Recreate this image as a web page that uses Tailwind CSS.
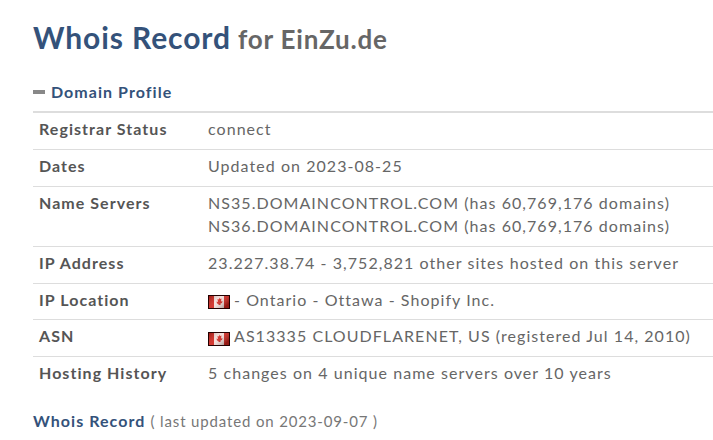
<!DOCTYPE html><html><head><script src="https://cdn.jsdelivr.net/npm/@tailwindcss/browser@4"></script></head>
<body class="bg-white overflow-hidden h-[440px] font-['Lato',sans-serif] text-[#666] tracking-[1.05px]">
<div class="pl-[33px] pt-[17px]">
<h1 class="text-[26px] leading-[40px] font-bold text-[#666] tracking-[0.8px]"><span class="text-[30px] text-[#34527a] tracking-[0.9px]">Whois Record</span> for EinZu.de</h1>
<div class="mt-[20px] flex items-center h-[26px] text-[16px] font-bold text-[#34527a]"><span class="w-[12px] h-[4px] bg-[#888] mr-[6px]"></span>Domain Profile</div>
<div class="mt-[6px] text-[16px] border-t-2 border-[#ddd]">
<div class="flex border-b border-[#ddd] pt-[6px] pb-[10px] pl-[6px] leading-[20px]"><div class="w-[169px] font-bold text-[#555]">Registrar Status</div><div>connect</div></div>
<div class="flex border-b border-[#ddd] pt-[6px] pb-[10px] pl-[6px] leading-[20px]"><div class="w-[169px] font-bold text-[#555]">Dates</div><div>Updated on 2023-08-25</div></div>
<div class="flex border-b border-[#ddd] pt-[4px] pb-[9px] pl-[6px] leading-[23px]"><div class="w-[169px] font-bold text-[#555]">Name Servers</div><div>NS35.DOMAINCONTROL.COM (has 60,769,176 domains)<br>NS36.DOMAINCONTROL.COM (has 60,769,176 domains)</div></div>
<div class="flex border-b border-[#ddd] pt-[6px] pb-[10px] pl-[6px] leading-[20px]"><div class="w-[169px] font-bold text-[#555]">IP Address</div><div>23.227.38.74 - 3,752,821 other sites hosted on this server</div></div>
<div class="flex border-b border-[#ddd] pt-[6px] pb-[9px] pl-[6px] leading-[20px]"><div class="w-[169px] font-bold text-[#555]">IP Location</div><div class="flex items-center"><svg width="22" height="14" class="mr-[4px] mt-[3px]"><defs><linearGradient id="s" x1="0" y1="0" x2="1" y2="0.6"><stop offset="0" stop-color="#000" stop-opacity="0.25"/><stop offset="0.5" stop-color="#fff" stop-opacity="0.1"/><stop offset="1" stop-color="#000" stop-opacity="0.3"/></linearGradient></defs><rect width="22" height="14" fill="#200"/><rect x="1" y="1" width="20" height="12" fill="#f6dcd8"/><rect x="1" y="1" width="5" height="12" fill="#d0241c"/><rect x="16" y="1" width="5" height="12" fill="#d0241c"/><path d="M11 2.500l1 1.500 1.500-.5-.5 3 1.500-.5-.5 2-1.500.5v1.500h-2V9l-1.500-.5-.5-2 1.500.5-.5-3 1.500.5z" fill="#d0241c"/><rect x="1" y="1" width="20" height="12" fill="url(#s)"/></svg>- Ontario - Ottawa - Shopify Inc.</div></div>
<div class="flex border-b border-[#ddd] pt-[6px] pb-[10px] pl-[6px] leading-[20px]"><div class="w-[169px] font-bold text-[#555]">ASN</div><div class="flex items-center"><svg width="22" height="14" class="mr-[4px] mt-[6px]"><defs><linearGradient id="t" x1="0" y1="0" x2="1" y2="0.6"><stop offset="0" stop-color="#000" stop-opacity="0.25"/><stop offset="0.5" stop-color="#fff" stop-opacity="0.1"/><stop offset="1" stop-color="#000" stop-opacity="0.3"/></linearGradient></defs><rect width="22" height="14" fill="#200"/><rect x="1" y="1" width="20" height="12" fill="#f6dcd8"/><rect x="1" y="1" width="5" height="12" fill="#d0241c"/><rect x="16" y="1" width="5" height="12" fill="#d0241c"/><path d="M11 2.500l1 1.500 1.500-.5-.5 3 1.500-.5-.5 2-1.500.5v1.500h-2V9l-1.500-.5-.5-2 1.500.5-.5-3 1.500.5z" fill="#d0241c"/><rect x="1" y="1" width="20" height="12" fill="url(#t)"/></svg>AS13335 CLOUDFLARENET, US (registered Jul 14, 2010)</div></div>
<div class="flex pt-[6px] pb-[10px] pl-[6px] leading-[20px]"><div class="w-[169px] font-bold text-[#555]">Hosting History</div><div>5 changes on 4 unique name servers over 10 years</div></div>
</div>
<div class="mt-[16px] text-[16px] leading-[24px]"><span class="text-[#34527a] font-bold">Whois Record</span> <span class="text-[15px] tracking-[0.85px] text-[#777]">( last updated on 2023-09-07 )</span></div>
</div>
</body></html>
